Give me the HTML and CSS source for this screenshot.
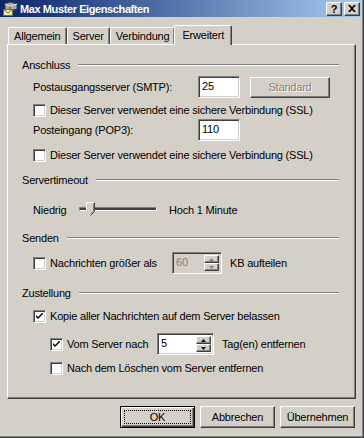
FILE: index.html
```html
<!DOCTYPE html>
<html lang="de">
<head>
    <meta charset="UTF-8">
    <title>Max Muster Eigenschaften</title>
    <link rel="stylesheet" href="styles.css">
</head>
<body>
<div class="window">
    <!-- Title bar -->
    <div class="titlebar">
        <svg class="title-icon" width="16" height="16" viewBox="0 0 16 16">
            <path d="M3 3 L8 1 L15 3 L15 8 L8 10 L3 8 Z" fill="#a8a8a8" stroke="#404040" stroke-width="1"/>
            <path d="M3 3 L8 5 L15 3" fill="none" stroke="#e8e8e8" stroke-width="1"/>
            <path d="M8 5 L8 10" stroke="#606060" stroke-width="1"/>
            <rect x="1.5" y="8.5" width="9" height="6" fill="#f8f0a0" stroke="#707030"/>
            <path d="M1.5 8.5 L6 12 L10.5 8.5" fill="none" stroke="#707030"/>
        </svg>
        <span class="title-text">Max Muster Eigenschaften</span>
        <div class="title-buttons">
            <div class="cap-btn">?</div>
            <div class="cap-btn close">
                <svg width="8" height="7" viewBox="0 0 8 7"><path d="M0 0 L2 0 L4 2 L6 0 L8 0 L5 3.5 L8 7 L6 7 L4 5 L2 7 L0 7 L3 3.5 Z" fill="#000"/></svg>
            </div>
        </div>
    </div>

    <!-- Tabs -->
    <div class="tabs">
        <div class="tab">Allgemein</div>
        <div class="tab">Server</div>
        <div class="tab">Verbindung</div>
        <div class="tab active">Erweitert</div>
    </div>

    <div class="panel">
        <!-- Anschluss -->
        <div class="group-title first"><span>Anschluss</span><div class="etch"></div></div>
        <div class="row r-smtp">
            <span class="label">Postausgangsserver (SMTP):</span>
            <div class="input port">25</div>
            <div class="button disabled std">Standard</div>
        </div>
        <div class="row r-ssl1">
            <div class="check"></div>
            <span>Dieser Server verwendet eine sichere Verbindung (SSL)</span>
        </div>
        <div class="row r-pop">
            <span class="label">Posteingang (POP3):</span>
            <div class="input port">110</div>
        </div>
        <div class="row r-ssl2">
            <div class="check"></div>
            <span>Dieser Server verwendet eine sichere Verbindung (SSL)</span>
        </div>

        <!-- Servertimeout -->
        <div class="group-title r-timeout"><span>Servertimeout</span><div class="etch"></div></div>
        <div class="row r-slider">
            <span class="slider-label">Niedrig</span>
            <div class="slider">
                <div class="track"></div>
                <svg class="thumb" width="9" height="14" viewBox="0 0 9 14">
                    <path d="M0.5 0.5 H8.5 V9.5 L4.5 13.5 L0.5 9.5 Z" fill="#d4d0c8"/>
                    <path d="M0.5 9.5 V0.5 H8.5" fill="none" stroke="#fff"/>
                    <path d="M8.5 0.5 V9.5 L4.5 13.5" fill="none" stroke="#404040"/>
                    <path d="M7.5 1.5 V9 L4.5 12" fill="none" stroke="#808080"/>
                </svg>
            </div>
            <span>Hoch 1 Minute</span>
        </div>

        <!-- Senden -->
        <div class="group-title r-send"><span>Senden</span><div class="etch"></div></div>
        <div class="row r-size">
            <div class="check"></div>
            <span class="size-label">Nachrichten größer als</span>
            <div class="input spin disabled size">
                <span>60</span>
                <div class="spin-btns">
                    <div class="spin-btn"><svg width="5" height="3" viewBox="0 0 5 3"><path d="M2.5 0 L5 3 H0 Z" fill="#808080"/></svg></div>
                    <div class="spin-btn"><svg width="5" height="3" viewBox="0 0 5 3"><path d="M0 0 H5 L2.5 3 Z" fill="#808080"/></svg></div>
                </div>
            </div>
            <span class="after">KB aufteilen</span>
        </div>

        <!-- Zustellung -->
        <div class="group-title r-deliver"><span>Zustellung</span><div class="etch"></div></div>
        <div class="row r-copy">
            <div class="check checked">
                <svg width="7" height="7" viewBox="0 0 7 7"><path d="M0 2 L0 4 L2 6 L7 1 L7 -1 L2 4 Z" fill="#000"/></svg>
            </div>
            <span>Kopie aller Nachrichten auf dem Server belassen</span>
        </div>
        <div class="row sub r-days">
            <div class="check checked">
                <svg width="7" height="7" viewBox="0 0 7 7"><path d="M0 2 L0 4 L2 6 L7 1 L7 -1 L2 4 Z" fill="#000"/></svg>
            </div>
            <span class="days-label">Vom Server nach</span>
            <div class="input spin days">
                <span>5</span>
                <div class="spin-btns">
                    <div class="spin-btn"><svg width="5" height="3" viewBox="0 0 5 3"><path d="M2.5 0 L5 3 H0 Z" fill="#000"/></svg></div>
                    <div class="spin-btn"><svg width="5" height="3" viewBox="0 0 5 3"><path d="M0 0 H5 L2.5 3 Z" fill="#000"/></svg></div>
                </div>
            </div>
            <span class="after">Tag(en) entfernen</span>
        </div>
        <div class="row sub r-delete">
            <div class="check"></div>
            <span>Nach dem Löschen vom Server entfernen</span>
        </div>
    </div>

    <!-- Dialog buttons -->
    <div class="dialog-buttons">
        <div class="button default"><span class="focus">OK</span></div>
        <div class="button">Abbrechen</div>
        <div class="button">Übernehmen</div>
    </div>
</div>
</body>
</html>
```

FILE: styles.css
```css
body {
    margin: 0;
    padding: 0;
    font-family: 'Liberation Sans', Arial, sans-serif;
    font-size: 11px;
    letter-spacing: -0.2px;
    color: #000;
    background: #d4d0c8;
}

.window {
    width: 364px;
    height: 438px;
    box-sizing: border-box;
    background: #d4d0c8;
    border-right: 1px solid #404040;
    border-bottom: 1px solid #404040;
    box-shadow: inset -1px -1px 0 #808080;
    overflow: hidden;
}

/* Title bar */
.titlebar {
    height: 17px;
    margin-right: 2px;
    display: flex;
    align-items: center;
    background: linear-gradient(to right, #0a246a, #a6caf0);
    color: #fff;
}

.title-icon {
    margin-left: 2px;
    margin-right: 2px;
}

.title-text {
    font-weight: bold;
    font-size: 11px;
    letter-spacing: -0.4px;
}

.title-buttons {
    margin-left: auto;
    margin-right: 1px;
    display: flex;
    gap: 2px;
}

.cap-btn {
    width: 16px;
    height: 14px;
    box-sizing: border-box;
    background: #d4d0c8;
    color: #000;
    font-weight: bold;
    font-size: 11px;
    line-height: 12px;
    text-align: center;
    border: 1px solid;
    border-color: #fff #404040 #404040 #fff;
    box-shadow: inset -1px -1px 0 #808080;
    display: flex;
    align-items: center;
    justify-content: center;
}

/* Tabs */
.tabs {
    display: flex;
    align-items: flex-end;
    margin-top: 8px;
    margin-left: 8px;
    height: 19px;
    position: relative;
    z-index: 1;
}

.tab {
    height: 17px;
    box-sizing: border-box;
    padding: 2px 5px 0 5px;
    border-top: 1px solid #fff;
    border-left: 1px solid #fff;
    border-right: 1px solid #404040;
    box-shadow: inset -1px 0 0 #808080;
    border-radius: 2px 2px 0 0;
    background: #d4d0c8;
}

.tab.active {
    height: 20px;
    margin: 0 -2px -1px -1px;
    padding: 3px 7px 0 7px;
    position: relative;
}

/* Panel */
.panel {
    margin-left: 7px;
    width: 349px;
    height: 355px;
    box-sizing: border-box;
    border-top: 1px solid #fff;
    border-left: 1px solid #fff;
    border-right: 1px solid #404040;
    border-bottom: 1px solid #404040;
    box-shadow: inset -1px -1px 0 #808080;
    padding: 0 16px 0 14px;
}

.group-title {
    height: 20px;
    display: flex;
    align-items: center;
    gap: 8px;
}

.group-title.first { margin-top: 10px; }

.etch {
    flex: 1;
    height: 1px;
    background: #808080;
    border-bottom: 1px solid #fff;
}

.row {
    height: 20px;
    display: flex;
    align-items: center;
    padding-left: 11px;
}

.row.sub { padding-left: 28px; }

.r-smtp { margin-top: 2px; }
.r-ssl1 { margin-top: 3px; }
.r-pop { margin-top: 0; }
.r-ssl2 { margin-top: 5px; }
.r-timeout { margin-top: 5px; }
.r-slider { margin-top: 10px; }
.r-send { margin-top: 8px; }
.r-size { margin-top: 5px; }
.r-deliver { margin-top: 10px; }
.r-copy { margin-top: 3px; }
.r-days { margin-top: 8px; }
.r-delete { margin-top: 4px; }

.label { width: 165px; }

/* Edit boxes */
.input {
    height: 22px;
    box-sizing: border-box;
    background: #fff;
    border: 1px solid;
    border-color: #808080 #fff #fff #808080;
    box-shadow: inset 1px 1px 0 #404040, inset -1px -1px 0 #d4d0c8;
    padding: 3px 0 0 3px;
    display: flex;
    align-items: flex-start;
}

.input.port { width: 42px; }

.input.disabled {
    background: #d4d0c8;
    color: #808080;
}

.input.spin {
    padding-right: 2px;
    align-items: stretch;
}

.input.spin span {
    flex: 1;
}

.input.size { width: 50px; }
.input.days { width: 57px; }

.spin-btns {
    display: flex;
    flex-direction: column;
    margin-top: -1px;
    margin-bottom: 2px;
    width: 15px;
}

.spin-btn {
    flex: 1;
    box-sizing: border-box;
    background: #d4d0c8;
    border: 1px solid;
    border-color: #fff #404040 #404040 #fff;
    box-shadow: inset -1px -1px 0 #808080;
    display: flex;
    align-items: center;
    justify-content: center;
}

.after { margin-left: 8px; }
.size-label { width: 122px; }
.days-label { width: 90px; }

/* Checkboxes */
.check {
    width: 13px;
    height: 13px;
    box-sizing: border-box;
    background: #fff;
    border: 1px solid;
    border-color: #808080 #fff #fff #808080;
    box-shadow: inset 1px 1px 0 #404040, inset -1px -1px 0 #d4d0c8;
    margin-right: 4px;
    display: flex;
    align-items: center;
    justify-content: center;
    flex-shrink: 0;
}

/* Slider */
.slider-label { width: 46px; }

.slider {
    width: 78px;
    height: 14px;
    position: relative;
    margin-right: 12px;
}

.track {
    position: absolute;
    left: 0;
    right: 0;
    top: 4px;
    height: 2px;
    border-top: 1px solid #808080;
    border-left: 1px solid #808080;
    border-bottom: 1px solid #fff;
    border-right: 1px solid #fff;
    background: #404040;
}

.thumb {
    position: absolute;
    left: 7px;
    top: -1px;
}

/* Buttons */
.button {
    height: 21px;
    box-sizing: border-box;
    background: #d4d0c8;
    border: 1px solid;
    border-color: #fff #404040 #404040 #fff;
    box-shadow: inset -1px -1px 0 #808080;
    display: flex;
    align-items: center;
    justify-content: center;
}

.button.std {
    width: 80px;
    margin-left: 10px;
}

.button.disabled {
    color: #808080;
    text-shadow: 1px 1px 0 #fff;
}

.dialog-buttons {
    display: flex;
    justify-content: flex-end;
    gap: 5px;
    margin-top: 7px;
    margin-right: 8px;
}

.dialog-buttons .button {
    width: 75px;
    height: 22px;
}

.button.default {
    border: 1px solid #000;
    box-shadow: inset 1px 1px 0 #fff, inset -1px -1px 0 #404040, inset -2px -2px 0 #808080;
    padding: 3px;
}

.focus {
    flex: 1;
    align-self: stretch;
    border: 1px dotted #000;
    display: flex;
    align-items: center;
    justify-content: center;
}
```
